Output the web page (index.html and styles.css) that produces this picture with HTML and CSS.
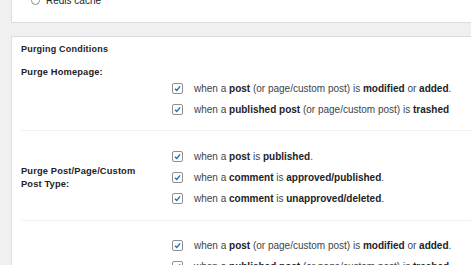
FILE: index.html
```html
<!DOCTYPE html>
<html lang="en">
<head>
  <meta charset="UTF-8">
  <title>Purging Conditions</title>
  <link rel="stylesheet" href="styles.css">
</head>
<body>
  <div class="card card-prev">
    <label class="opt opt-radio"><span class="radio"></span>Redis cache</label>
  </div>

  <div class="card">
    <h3 class="card-title">Purging Conditions</h3>

    <div class="row row-first">
      <div class="row-label row-label-top">Purge Homepage:</div>
      <div class="row-opts">
        <label class="opt"><span class="box"><svg viewBox="0 0 10 10"><path d="M2.2 5.2 L4.2 7.2 L7.9 2.6"/></svg></span>when a <b>post</b> (or page/custom post) is <b>modified</b> or <b>added</b>.</label>
        <label class="opt"><span class="box"><svg viewBox="0 0 10 10"><path d="M2.2 5.2 L4.2 7.2 L7.9 2.6"/></svg></span>when a <b>published post</b> (or page/custom post) is <b>trashed</b></label>
      </div>
    </div>

    <div class="row">
      <div class="row-label">Purge Post/Page/Custom<br>Post Type:</div>
      <div class="row-opts">
        <label class="opt"><span class="box"><svg viewBox="0 0 10 10"><path d="M2.2 5.2 L4.2 7.2 L7.9 2.6"/></svg></span>when a <b>post</b> is <b>published</b>.</label>
        <label class="opt"><span class="box"><svg viewBox="0 0 10 10"><path d="M2.2 5.2 L4.2 7.2 L7.9 2.6"/></svg></span>when a <b>comment</b> is <b>approved/published</b>.</label>
        <label class="opt"><span class="box"><svg viewBox="0 0 10 10"><path d="M2.2 5.2 L4.2 7.2 L7.9 2.6"/></svg></span>when a <b>comment</b> is <b>unapproved/deleted</b>.</label>
      </div>
    </div>

    <div class="row row-last">
      <div class="row-label">Purge Archives:</div>
      <div class="row-opts">
        <label class="opt"><span class="box"><svg viewBox="0 0 10 10"><path d="M2.2 5.2 L4.2 7.2 L7.9 2.6"/></svg></span>when a <b>post</b> (or page/custom post) is <b>modified</b> or <b>added</b>.</label>
        <label class="opt"><span class="box"><svg viewBox="0 0 10 10"><path d="M2.2 5.2 L4.2 7.2 L7.9 2.6"/></svg></span>when a <b>published post</b> (or page/custom post) is <b>trashed</b>.</label>
        <label class="opt"><span class="box"><svg viewBox="0 0 10 10"><path d="M2.2 5.2 L4.2 7.2 L7.9 2.6"/></svg></span>when a <b>comment</b> is <b>approved/published</b>.</label>
        <label class="opt"><span class="box"><svg viewBox="0 0 10 10"><path d="M2.2 5.2 L4.2 7.2 L7.9 2.6"/></svg></span>when a <b>comment</b> is <b>unapproved/deleted</b>.</label>
      </div>
    </div>
  </div>
</body>
</html>
```

FILE: styles.css
```css
html, body {
  overflow: hidden;
}
body {
  margin: 0;
  padding-left: 11px;
  background: #f0f0f1;
  font-family: "Liberation Sans", Arial, sans-serif;
  font-size: 9px;
  color: #3c434a;
}
.card {
  background: #fff;
  border: 1px solid #dcdcde;
  border-right: none;
  padding-left: 9px;
}
.card-prev {
  margin-top: -10px;
  height: 31px;
  margin-bottom: 13px;
  padding-left: 19px;
}
.card-title {
  margin: 0;
  padding-top: 7px;
  height: 21px;
  line-height: 11px;
  font-size: 9px;
  letter-spacing: 0.2px;
  font-weight: bold;
  color: #1d2327;
}
.row {
  display: grid;
  grid-template-columns: 151px 1fr;
  border-bottom: 1px solid #f0f0f1;
  padding: 15px 0 11px;
}
.row-first {
  padding-top: 13px;
  padding-bottom: 10px;
}
.row-last {
  border-bottom: none;
  padding-top: 14px;
}
.row-label {
  align-self: center;
  font-size: 9.3px;
  font-weight: bold;
  color: #1d2327;
  line-height: 13px;
  letter-spacing: 0.15px;
}
.row-label-top {
  align-self: start;
  margin-top: -12px;
}
.row-opts {
  display: flex;
  flex-direction: column;
  font-size: 10px;
}
.opt {
  display: flex;
  align-items: center;
  height: 21px;
  white-space: pre;
}
.opt b {
  color: #1d2327;
}
.box {
  width: 9px;
  height: 9px;
  border: 1px solid #8c8f94;
  border-radius: 2px;
  margin-right: 11px;
  flex: none;
  display: flex;
  background: #fff;
}
.box svg {
  width: 9px;
  height: 9px;
  fill: none;
  stroke: #2271b1;
  stroke-width: 1.6;
}
.opt-radio {
  color: #1d2327;
  height: 18px;
  font-size: 10px;
}
.radio {
  width: 7px;
  height: 7px;
  border: 1px solid #8c8f94;
  border-radius: 50%;
  margin-right: 6px;
}
```
